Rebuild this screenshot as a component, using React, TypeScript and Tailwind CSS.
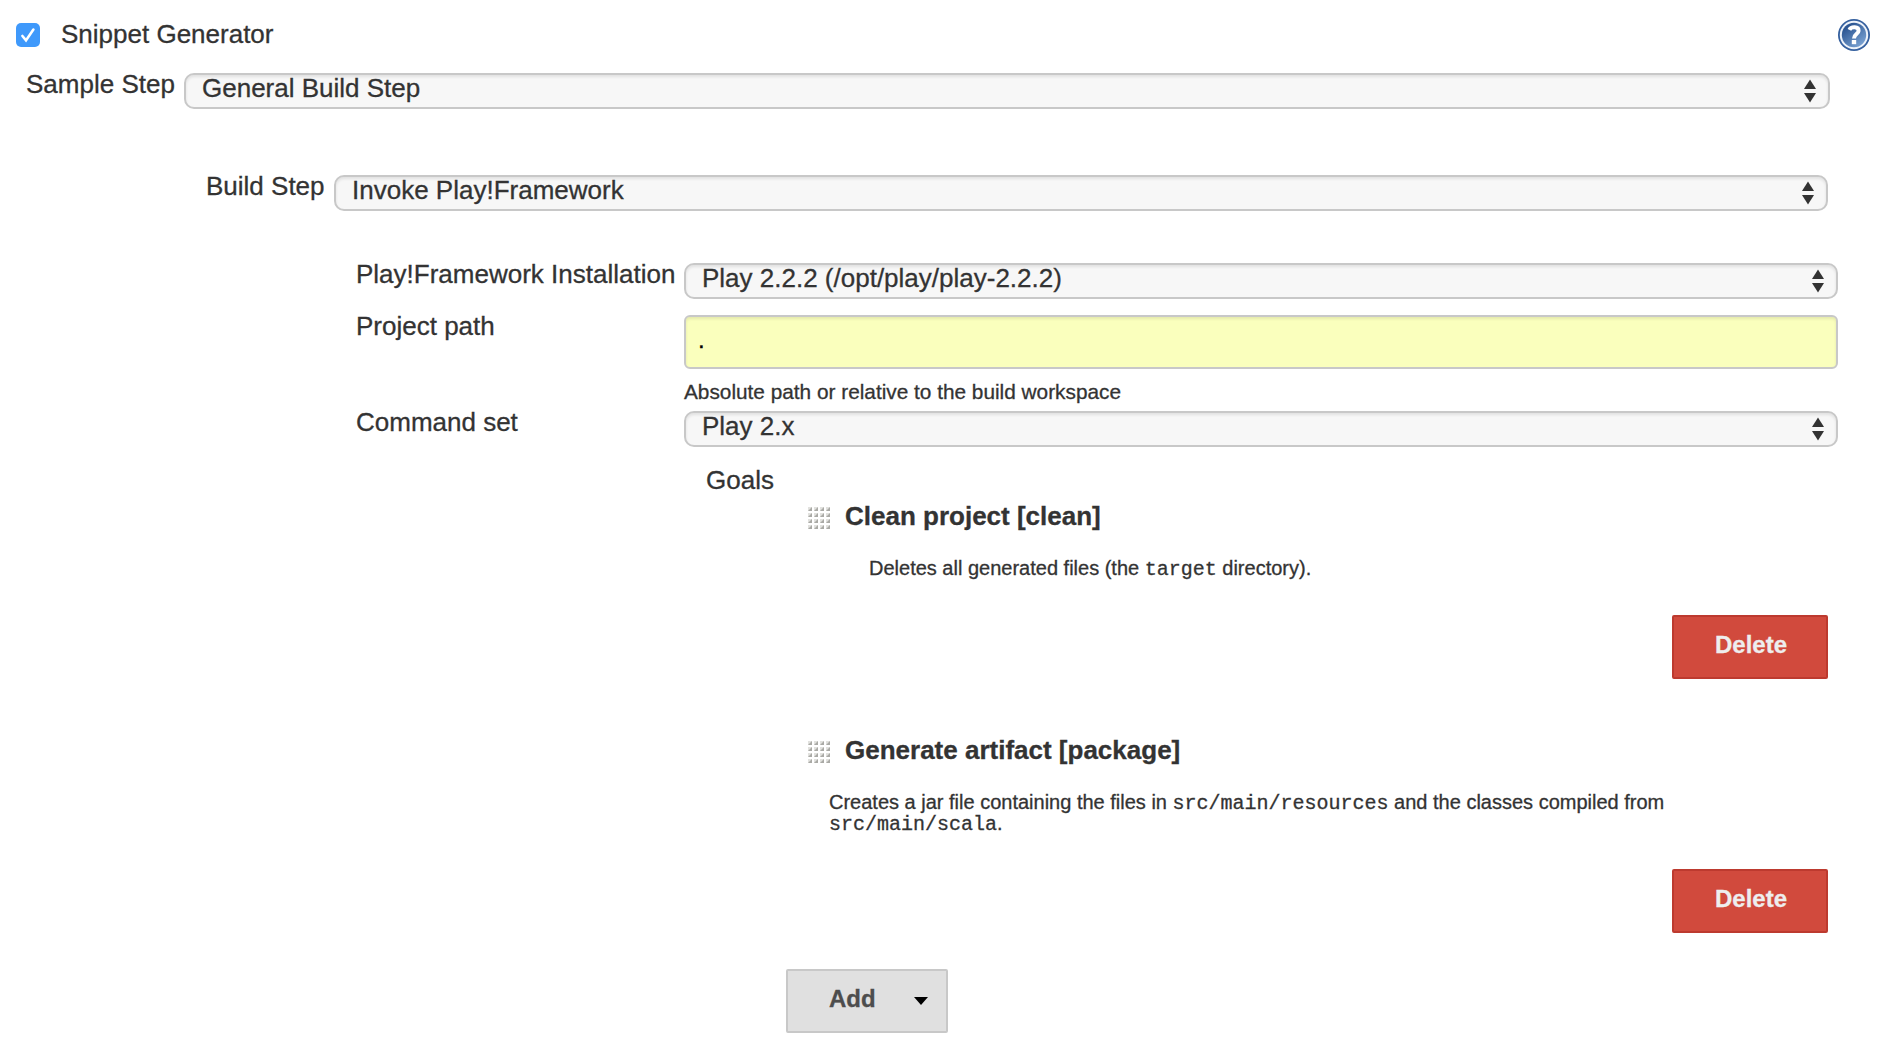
import type { ReactNode } from "react";

function Arrows() {
  return (
    <svg width="12" height="24" viewBox="0 0 12 24" className="shrink-0" fill="#333">
      <path d="M6 0.5 L12 10 H0 Z" />
      <path d="M6 23.5 L12 14 H0 Z" />
    </svg>
  );
}

function Select({ value, className }: { value: string; className: string }) {
  return (
    <button
      className={
        "flex h-9 items-start justify-between rounded-[10px] border-2 border-[#c8c8c8] bg-[#f7f7f7] pr-3 pl-4 text-left shadow-[inset_0_2px_3px_rgba(0,0,0,0.09)] " +
        className
      }
    >
      <span className="-mt-[2px] leading-[30px]">{value}</span>
      <span className="mt-1">
        <Arrows />
      </span>
    </button>
  );
}

function Grip() {
  const steps = [0, 1, 2, 3];
  return (
    <svg width="24" height="24" viewBox="0 0 24 24" className="shrink-0">
      {steps.map((r) =>
        steps.map((c) => (
          <g key={`${r}-${c}`} transform={`translate(${c * 6} ${r * 6})`}>
            <path d="M0 0 H4 V4 H0 Z" fill="#e2e2df" />
            <path d="M0 4 L4 0 V4 Z" fill="#aaaaa6" />
          </g>
        )),
      )}
    </svg>
  );
}

function HelpIcon() {
  return (
    <svg width="32" height="32" viewBox="0 0 32 32">
      <defs>
        <linearGradient id="helpFill" x1="0" y1="0" x2="0.8" y2="1">
          <stop offset="0.2" stopColor="#2b5592" />
          <stop offset="1" stopColor="#7ea6d6" />
        </linearGradient>
      </defs>
      <circle cx="16" cy="16" r="16" fill="#35609f" />
      <circle cx="16" cy="16" r="14.2" fill="#eef3fa" />
      <circle cx="16" cy="16" r="12.2" fill="url(#helpFill)" />
      <path
        d="M11.4 10.8 C13 7.4 20.8 7.2 20.6 11.8 C20.4 15.2 16 15 16 19.4"
        fill="none"
        stroke="#fff"
        strokeWidth="4"
      />
      <rect x="13.8" y="21" width="4.4" height="4.2" fill="#fff" />
    </svg>
  );
}

function DeleteButton() {
  return (
    <button className="ml-[864px] block h-16 w-[156px] rounded-[2px] border-2 border-[#bd3a2f] bg-[#d14a3d] pb-[5px] pl-[2px] text-2xl leading-[28px] font-bold text-[#eee]">
      Delete
    </button>
  );
}

function Goal({ title, children }: { title: string; children: ReactNode }) {
  return (
    <section className="pl-[808px]">
      <h3 className="flex h-[31px] pt-px font-bold">
        <span className="mt-[6px] w-[37px]">
          <Grip />
        </span>
        {title}
      </h3>
      {children}
      <DeleteButton />
    </section>
  );
}

function Code({ children }: { children: string }) {
  return <code className="font-['Liberation_Mono',monospace] text-xl leading-[0]">{children}</code>;
}

export default function App() {
  return (
    <main className="h-[1059px] w-[1888px] overflow-hidden bg-white font-['Liberation_Sans',Arial,sans-serif] text-[26px] leading-[30px] text-[#333] [-webkit-text-stroke:0.3px]">
      <header className="flex h-[69px] items-start pt-[19px] pr-[18px] pl-4">
        <span className="mt-1 flex size-6 items-center justify-center rounded-[5px] bg-[#3f99fb]">
          <svg width="24" height="24" viewBox="0 0 24 24" fill="none" stroke="#fff" strokeWidth="2.6" strokeLinecap="round">
            <path d="M6.4 13 L10 17.4 L17.4 6.6" />
          </svg>
        </span>
        <label className="ml-[21px] flex-1">Snippet Generator</label>
        <HelpIcon />
      </header>

      <div className="flex h-[102px] items-start">
        <label className="w-[184px] pl-[26px]">Sample Step</label>
        <Select value="General Build Step" className="mt-1 w-[1646px]" />
      </div>

      <div className="flex h-[88px] items-start">
        <label className="w-[334px] pl-[206px]">Build Step</label>
        <Select value="Invoke Play!Framework" className="mt-1 w-[1494px]" />
      </div>

      <div className="flex h-[52px] items-start">
        <label className="w-[684px] pl-[356px]">Play!Framework Installation</label>
        <Select value="Play 2.2.2 (/opt/play/play-2.2.2)" className="mt-1 w-[1154px]" />
      </div>

      <div className="flex h-[96px] items-start">
        <label className="w-[684px] pl-[356px]">Project path</label>
        <div className="mt-1 w-[1154px]">
          <div className="h-[54px] rounded-[6px] border-2 border-[#c8c8c8] bg-[#faffbd] pt-2 pl-3 text-2xl leading-[30px] text-black shadow-[inset_0_2px_3px_rgba(0,0,0,0.09)]">
            .
          </div>
          <p className="mt-3 text-[20.8px] leading-[22px]">Absolute path or relative to the build workspace</p>
        </div>
      </div>

      <div className="flex h-[58px] items-start">
        <label className="w-[684px] pl-[356px]">Command set</label>
        <Select value="Play 2.x" className="mt-1 w-[1154px]" />
      </div>

      <div className="h-[35px] pl-[706px]">Goals</div>

      <Goal title="Clean project [clean]">
        <p className="mt-[26px] mb-[36px] pl-[61px] text-xl leading-[22px]">
          Deletes all generated files (the <Code>target</Code> directory).
        </p>
      </Goal>

      <div className="mt-[55px]">
        <Goal title="Generate artifact [package]">
          <p className="mt-[27px] mb-[35px] w-[880px] pl-[21px] text-xl leading-[21px]">
            Creates a jar file containing the files in <Code>src/main/resources</Code> and the classes compiled from
            <br />
            <Code>src/main/scala</Code>.
          </p>
        </Goal>
      </div>

      <button className="mt-9 ml-[786px] flex h-16 w-[162px] items-start rounded-[2px] border-2 border-[#c8c8c8] bg-[#e0e0e0] pt-[14px] pl-[41px] text-2xl leading-[28px] font-bold text-[#4d4d4d]">
        Add
        <svg width="14" height="8" viewBox="0 0 14 8" className="mt-3 ml-[38px]">
          <path d="M0 0 H14 L7 8 Z" fill="#000" />
        </svg>
      </button>
    </main>
  );
}
